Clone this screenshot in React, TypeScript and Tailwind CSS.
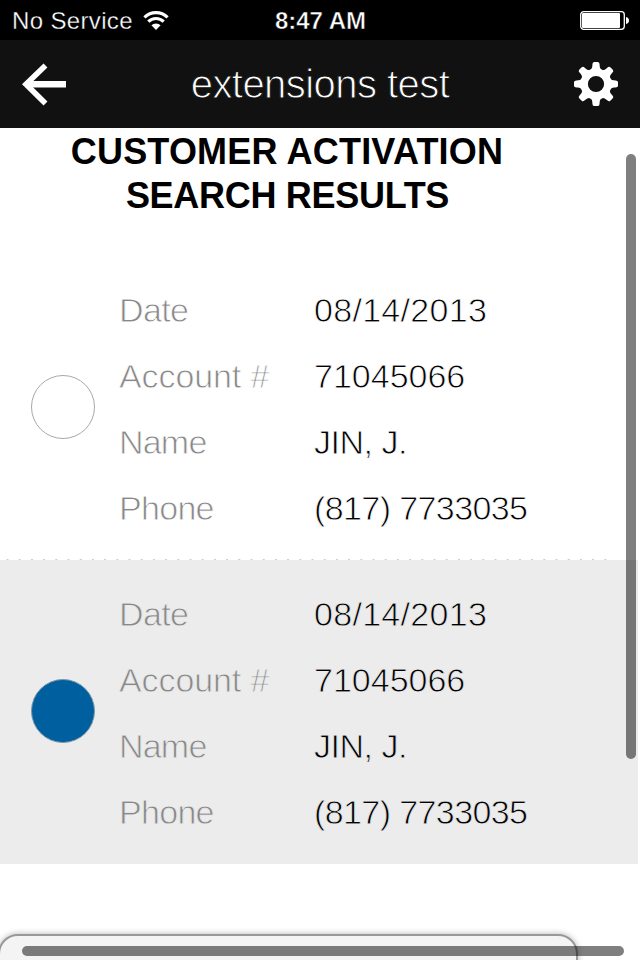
type Field = { label: string; value: string; labelSpacing: string; valueSpacing: string };

const fields: Field[] = [
  { label: "Date", value: "08/14/2013", labelSpacing: "tracking-[-0.6px]", valueSpacing: "tracking-[0.3px]" },
  { label: "Account #", value: "71045066", labelSpacing: "tracking-[-0.1px]", valueSpacing: "tracking-[0px]" },
  { label: "Name", value: "JIN, J.", labelSpacing: "tracking-[-0.8px]", valueSpacing: "tracking-[-0.5px]" },
  { label: "Phone", value: "(817) 7733035", labelSpacing: "tracking-[-0.7px]", valueSpacing: "tracking-[-0.6px]" },
];

function StatusBar() {
  return (
    <div className="flex h-10 items-center justify-between bg-black pl-3 pr-[11px] text-white">
      <div className="flex w-[200px] items-center gap-[10px]">
        <span className="whitespace-nowrap pt-0.5 text-[24px] leading-[38px] tracking-[0.35px] [-webkit-text-stroke:0.3px_#000]">No Service</span>
        <svg width="26" height="20" viewBox="0 0 26 20" className="mt-px" fill="none" stroke="white">
          <path d="M1.4 6.4a16.5 16.5 0 0 1 23.2 0" strokeWidth="3.1" />
          <path d="M5.3 10.7a10.8 10.8 0 0 1 15.4 0" strokeWidth="3.1" />
          <path d="M8.4 14.3a6.5 6.5 0 0 1 9.2 0L13 19Z" fill="white" stroke="none" />
        </svg>
      </div>
      <span className="whitespace-nowrap pt-0.5 text-[24px] font-bold leading-[38px] tracking-[0px] [-webkit-text-stroke:0.5px_#000]">8:47 AM</span>
      <div className="flex w-[200px] justify-end">
        <svg width="49" height="19" viewBox="0 0 49 19">
          <rect x="0.7" y="0.7" width="43.6" height="17.6" rx="3" fill="none" stroke="white" strokeWidth="1.3" />
          <rect x="2" y="2" width="38" height="15" rx="1" fill="white" />
          <path d="M46 6c2 .3 3 1.8 3 3.5S48 12.700 46 13Z" fill="white" />
        </svg>
      </div>
    </div>
  );
}

function NavBar() {
  return (
    <div className="flex h-[88px] items-center justify-between bg-[#111] pl-[22px] pr-[22px] text-white">
      <svg width="44" height="44" viewBox="0 0 44 44" fill="none" stroke="white" className="mt-[-1px]">
        <path d="M23.500 3.500L4 22.300L23.500 41.500" strokeWidth="5.600" />
        <path d="M5 22.300H44" strokeWidth="6.400" />
      </svg>
      <h1 className="whitespace-nowrap text-[40px] leading-[88px] tracking-[-0.55px] [-webkit-text-stroke:1px_#111]">extensions test</h1>
      <svg width="44" height="44" viewBox="-22 -22 44 44" className="mt-[-1px]">
        <g fill="white">
          {[0, 45, 90, 135, 180, 225, 270, 315].map((a) => (
            <path key={a} transform={`rotate(${a})`} d="M-6 -14C-4 -15 -3.600 -17 -3.600 -19.500Q-3.600 -22 -1.800 -22H1.800Q3.600 -22 3.600 -19.500C3.600 -17 4 -15 6 -14Z" />
          ))}
        </g>
        <circle r="11.800" fill="none" stroke="white" strokeWidth="7.400" />
      </svg>
    </div>
  );
}

function ResultCard({ selected }: { selected: boolean }) {
  return (
    <div className={selected ? "flex h-[304px] w-[638px] items-center bg-[#ececec]" : "flex h-[304px] w-[638px] items-center bg-white"}>
      <div
        className={
          selected
            ? "mr-[24px] ml-[31px] mt-[-2px] size-16 shrink-0 rounded-full border border-[#7d98aa] bg-[#005f9f]"
            : "mr-[24px] ml-[31px] mt-[-2px] size-16 shrink-0 rounded-full border-[1.5px] border-[#a8a8a8] bg-white"
        }
      />
      <dl className={selected ? "pt-0.5 [-webkit-text-stroke:0.8px_#ececec]" : "pt-0.5 [-webkit-text-stroke:0.8px_#fff]"}>
        {fields.map((f) => (
          <div key={f.label} className="flex h-[66px] items-center whitespace-nowrap text-[34px] leading-[66px]">
            <dt className={`w-[195px] text-[#888] ${f.labelSpacing}`}>{f.label}</dt>
            <dd className={`text-black ${f.valueSpacing}`}>{f.value}</dd>
          </div>
        ))}
      </dl>
    </div>
  );
}

export default function App() {
  return (
    <main className="relative h-[960px] w-[640px] overflow-hidden bg-white font-['Liberation_Sans',Arial,sans-serif]">
      <StatusBar />
      <NavBar />
      <h2 className="flex h-32 w-[574px] flex-col items-center pt-[2px] text-[36px] font-bold leading-[44px] text-black">
        <span className="whitespace-nowrap tracking-[0.2px]">CUSTOMER ACTIVATION</span>
        <span className="whitespace-nowrap pl-px tracking-[-0.3px]">SEARCH RESULTS</span>
      </h2>
      <ResultCard selected={false} />
      <svg width="612" height="1" className="-mt-px block">
        <line x1="6.500" x2="610" y1="0.5" y2="0.5" stroke="#ccc" strokeDasharray="2 10.200" />
      </svg>
      <ResultCard selected />
      <div className="mt-[70px] h-20 w-[580px] -translate-x-0.5 rounded-[20px] border-2 border-[#999] bg-[#f4f4f4] shadow-[0_0_6px_rgba(0,0,0,0.3)]" />
      <div className="absolute left-[626px] top-[154px] h-[605px] w-[10px] rounded-full bg-black/50" />
      <div className="absolute left-[22px] top-[946px] h-[10px] w-[602px] rounded-full bg-black/50" />
    </main>
  );
}
